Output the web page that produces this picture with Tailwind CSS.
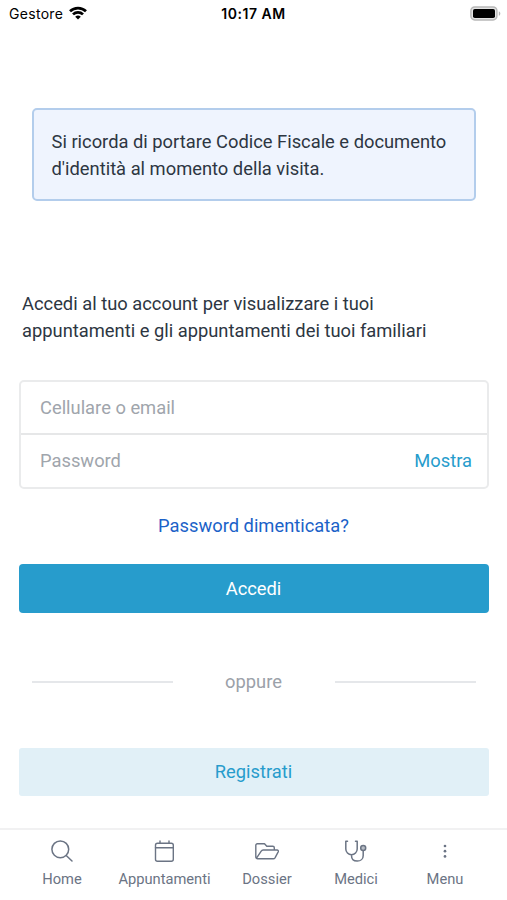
<!DOCTYPE html>
<html lang="it">
<head>
<meta charset="utf-8">
<meta name="viewport" content="width=device-width, initial-scale=1">
<title>Accedi</title>
<script src="https://cdn.jsdelivr.net/npm/@tailwindcss/browser@4"></script>
</head>
<body class="bg-white font-[Roboto,sans-serif] text-[18.33px] leading-[27px] text-[#2d3642]">
<div class="flex h-[900px] w-[507px] flex-col overflow-hidden">
  <header class="grid h-[28px] shrink-0 grid-cols-3 items-center font-[Inter,sans-serif] text-[14px] leading-[28px] text-black">
    <div class="flex items-center gap-[6px] pl-[9px]">
      <span class="tracking-[0.3px]">Gestore</span>
      <svg class="-mt-[2px] h-[14px] w-[18px]" viewBox="0 0 18 14" fill="none" stroke="#000" stroke-width="2.7"><path d="M1 5.3a11.5 11.5 0 0 1 16 0M4 8.4a7.2 7.2 0 0 1 10 0"/><path d="M9 13.6 6.2 10.8a4 4 0 0 1 5.6 0z" fill="#000" stroke="none"/></svg>
    </div>
    <div class="text-center font-semibold tracking-[0.55px]">10:17 AM</div>
    <div class="flex justify-end pr-[6px]">
      <svg class="-mt-[1px] h-[15px] w-[31px]" viewBox="0 0 31 15"><rect x=".9" y=".9" width="26" height="13" rx="3.8" fill="#e4e4e4" stroke="#b8b8b8" stroke-width="1.5"/><rect x="3" y="3" width="22" height="9" rx="1.8"/><path d="M28.8 5.2c2 .8 2 3.800 0 4.600z" fill="#b5b5b5"/></svg>
    </div>
  </header>

  <main class="flex h-[800px] shrink-0 flex-col pr-[18px] pl-[19px] pt-[80px]">
    <section class="mx-[13px] h-[93px] rounded-[5px] border-2 border-[#b3cdec] bg-[#eff4fe] px-[17.5px] pt-[18px]">
      <p class="whitespace-nowrap">Si ricorda di portare Codice Fiscale e documento<br>d'identità al momento della visita.</p>
    </section>
    <p class="mt-[89px] ml-[3px] whitespace-nowrap">Accedi al tuo account per visualizzare i tuoi<br>appuntamenti e gli appuntamenti dei tuoi familiari</p>
    <form class="mt-[36px] h-[109px] rounded-[5px] border-2 border-[#eaebec]">
      <div class="flex h-[53px] items-center border-b-2 border-[#e6e7e8] pl-[19px] text-[#a0a5ac]">Cellulare o email</div>
      <div class="flex h-[51px] items-center justify-between pr-[15px] pl-[19px] text-[#a0a5ac]"><span>Password</span><span class="text-[#279ccc]">Mostra</span></div>
    </form>
    <a class="mt-[23px] pr-[1px] text-center text-[#1b62c8]">Password dimenticata?</a>
    <button type="button" class="mt-[25px] h-[49px] rounded-[4px] bg-[#279ccc] pr-[1px] text-white">Accedi</button>
    <div class="mx-[13px] mt-[55px] flex items-center justify-between text-[#9ba1a9]">
      <span class="h-[2px] w-[141px] bg-[#e5e7ea]"></span><span class="pr-[1px]">oppure</span><span class="h-[2px] w-[141px] bg-[#e5e7ea]"></span>
    </div>
    <button type="button" class="mt-[53px] h-[48px] rounded-[3px] bg-[#e1f0f7] pr-[1px] pb-[2px] text-[#279ccc]">Registrati</button>
  </main>

  <nav class="grid h-[72px] shrink-0 grid-cols-[90px_115px_90px_88px_90px] justify-center border-t-2 border-[#f1f1f2] text-[14.7px] leading-[20px] text-[#6b7484]">
    <a class="flex flex-col items-center gap-[5px] pt-[9px]">
      <svg class="h-[25px] w-[24px]" viewBox="0 0 24 25" fill="none" stroke="currentColor" stroke-width="1.500" stroke-linecap="round"><circle cx="10.300" cy="10.300" r="8.400"/><path d="m16.200 16.500 5.800 5.500"/></svg>
      <span>Home</span>
    </a>
    <a class="flex flex-col items-center gap-[5px] pt-[9px]">
      <svg class="h-[25px] w-[24px]" viewBox="0 0 24 25" fill="none" stroke="currentColor" stroke-width="1.400" stroke-linecap="round" stroke-linejoin="round"><rect x="2.500" y="4.300" width="17.800" height="18" rx="2"/><path d="M2.500 8.700h17.800M7 4v-2M16 4v-2"/></svg>
      <span>Appuntamenti</span>
    </a>
    <a class="flex flex-col items-center gap-[5px] pt-[9px]">
      <svg class="h-[25px] w-[24px]" viewBox="0 0 24 25" fill="none" stroke="currentColor" stroke-width="1.400" stroke-linejoin="round"><path d="M19.300 11V8.800a1.500 1.500 0 0 0-1.500-1.500h-6L9.500 4.700H2.300A1.500 1.500 0 0 0 .8 6.200V18a1.800 1.800 0 0 0 1.800 1.800h15.700a2 2 0 0 0 1.700-1l3.200-6c.5-1-.1-1.800-1.100-1.800H8.200a2.200 2.200 0 0 0-2 1.200l-4.700 7"/></svg>
      <span>Dossier</span>
    </a>
    <a class="flex flex-col items-center gap-[5px] pt-[9px]">
      <svg class="h-[25px] w-[24px]" viewBox="0 0 24 25" fill="none" stroke="currentColor" stroke-width="1.500" stroke-linecap="round" stroke-linejoin="round"><path d="M3.500 2.200H1.800v7.800a5.700 5.700 0 0 0 11.400 0V2.200h-1.700M7.500 15.700v.8c0 3.500 2.400 5.600 5.700 5.600 3.500 0 6-2.300 6-5.700v-4.500"/><circle cx="19.200" cy="9.100" r="2.500" fill="#b9bec6"/></svg>
      <span>Medici</span>
    </a>
    <a class="flex flex-col items-center gap-[5px] pt-[9px]">
      <svg class="h-[25px] w-[24px]" viewBox="0 0 24 25" fill="currentColor"><circle cx="12" cy="7" r="1.350"/><circle cx="12" cy="12.200" r="1.350"/><circle cx="12" cy="17.400" r="1.350"/></svg>
      <span>Menu</span>
    </a>
  </nav>
</div>
</body>
</html>
